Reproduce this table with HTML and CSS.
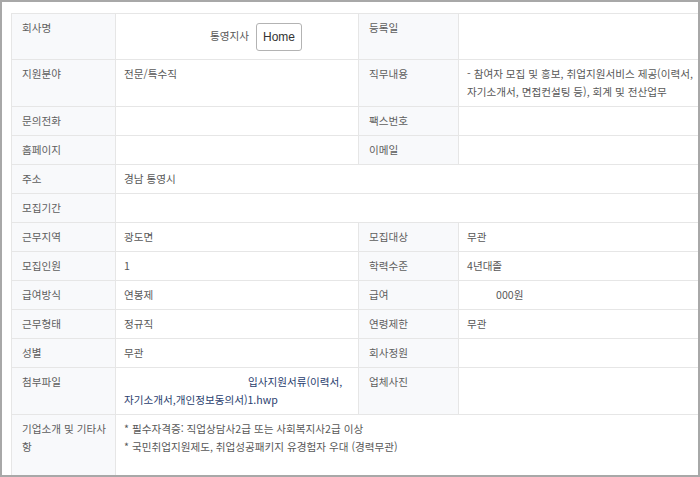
FILE: index.html
```html
<!DOCTYPE html>
<html lang="ko">
<head>
<meta charset="utf-8">
<title>채용정보</title>
<link rel="stylesheet" href="styles.css">
</head>
<body>
<div class="frame">
  <table class="info">
    <colgroup>
      <col class="c-label">
      <col class="c-value">
      <col class="c-label2">
      <col class="c-value2">
    </colgroup>
    <tbody>
      <tr>
        <th>회사명</th>
        <td class="company"><span class="logo-space"></span>통영지사<button class="home-btn" type="button">Home</button></td>
        <th>등록일</th>
        <td></td>
      </tr>
      <tr>
        <th>지원분야</th>
        <td>전문/특수직</td>
        <th>직무내용</th>
        <td>- 참여자 모집 및 홍보, 취업지원서비스 제공(이력서, 자기소개서, 면접컨설팅 등), 회계 및 전산업무</td>
      </tr>
      <tr>
        <th>문의전화</th>
        <td></td>
        <th>팩스번호</th>
        <td></td>
      </tr>
      <tr>
        <th>홈페이지</th>
        <td></td>
        <th>이메일</th>
        <td></td>
      </tr>
      <tr>
        <th>주소</th>
        <td colspan="3">경남 통영시</td>
      </tr>
      <tr>
        <th>모집기간</th>
        <td colspan="3"></td>
      </tr>
      <tr>
        <th>근무지역</th>
        <td>광도면</td>
        <th>모집대상</th>
        <td>무관</td>
      </tr>
      <tr>
        <th>모집인원</th>
        <td>1</td>
        <th>학력수준</th>
        <td>4년대졸</td>
      </tr>
      <tr>
        <th>급여방식</th>
        <td>연봉제</td>
        <th>급여</th>
        <td><span class="pay-space"></span>000원</td>
      </tr>
      <tr>
        <th>근무형태</th>
        <td>정규직</td>
        <th>연령제한</th>
        <td>무관</td>
      </tr>
      <tr>
        <th>성별</th>
        <td>무관</td>
        <th>회사정원</th>
        <td></td>
      </tr>
      <tr>
        <th>첨부파일</th>
        <td><span class="file-space"></span><a class="file-link" href="#">입사지원서류(이력서,자기소개서,개인정보동의서)1.hwp</a></td>
        <th>업체사진</th>
        <td></td>
      </tr>
      <tr>
        <th>기업소개 및 기타사항</th>
        <td colspan="3" class="intro">* 필수자격증: 직업상담사2급 또는 사회복지사2급 이상<br>* 국민취업지원제도, 취업성공패키지 유경험자 우대 (경력무관)</td>
      </tr>
    </tbody>
  </table>
</div>
</body>
</html>
```

FILE: styles.css
```css
* {
  box-sizing: border-box;
}

html, body {
  margin: 0;
  padding: 0;
  background: #fff;
}

body {
  font-family: "Noto Sans CJK KR", "Noto Sans", sans-serif;
}

.frame {
  width: 700px;
  height: 477px;
  border: 2px solid #a8a8a8;
  overflow: hidden;
  padding: 11px 0 0 9px;
  background: #fff;
}

.info {
  border-collapse: collapse;
  table-layout: fixed;
  width: 694px;
  border-top: 1px solid #d6d6d6;
  border-left: 1px solid #e3e3e3;
  font-size: 10.6px;
  line-height: 18px;
  color: #585858;
}

.c-label { width: 104px; }
.c-value { width: 243px; }
.c-label2 { width: 100px; }
.c-value2 { width: 247px; }

.info th,
.info td {
  border: 1px solid #e6e6e6;
  padding: 5px 9px 5px 8px;
  vertical-align: top;
  text-align: left;
  font-weight: normal;
}

.info th {
  background: #f8f9fb;
  color: #5e5e5e;
  padding: 5px 2px 5px 10px;
}

.info td.company {
  padding: 8px 9px 8px 8px;
  line-height: 28px;
  vertical-align: middle;
}

.logo-space {
  display: inline-block;
  width: 86px;
}

.home-btn {
  display: inline-block;
  vertical-align: middle;
  margin-left: 7px;
  width: 46px;
  height: 28px;
  padding: 0;
  border: 1px solid #b3b3b3;
  border-radius: 3px;
  background: #fff;
  font-family: "Liberation Sans", Arial, sans-serif;
  font-size: 12px;
  color: #333;
  line-height: 26px;
}

.pay-space {
  display: inline-block;
  width: 29px;
}

.file-space {
  display: inline-block;
  width: 124px;
}

.file-link {
  color: #2a3e6e;
  text-decoration: none;
}

.info td.intro {
  padding-bottom: 40px;
}
```
